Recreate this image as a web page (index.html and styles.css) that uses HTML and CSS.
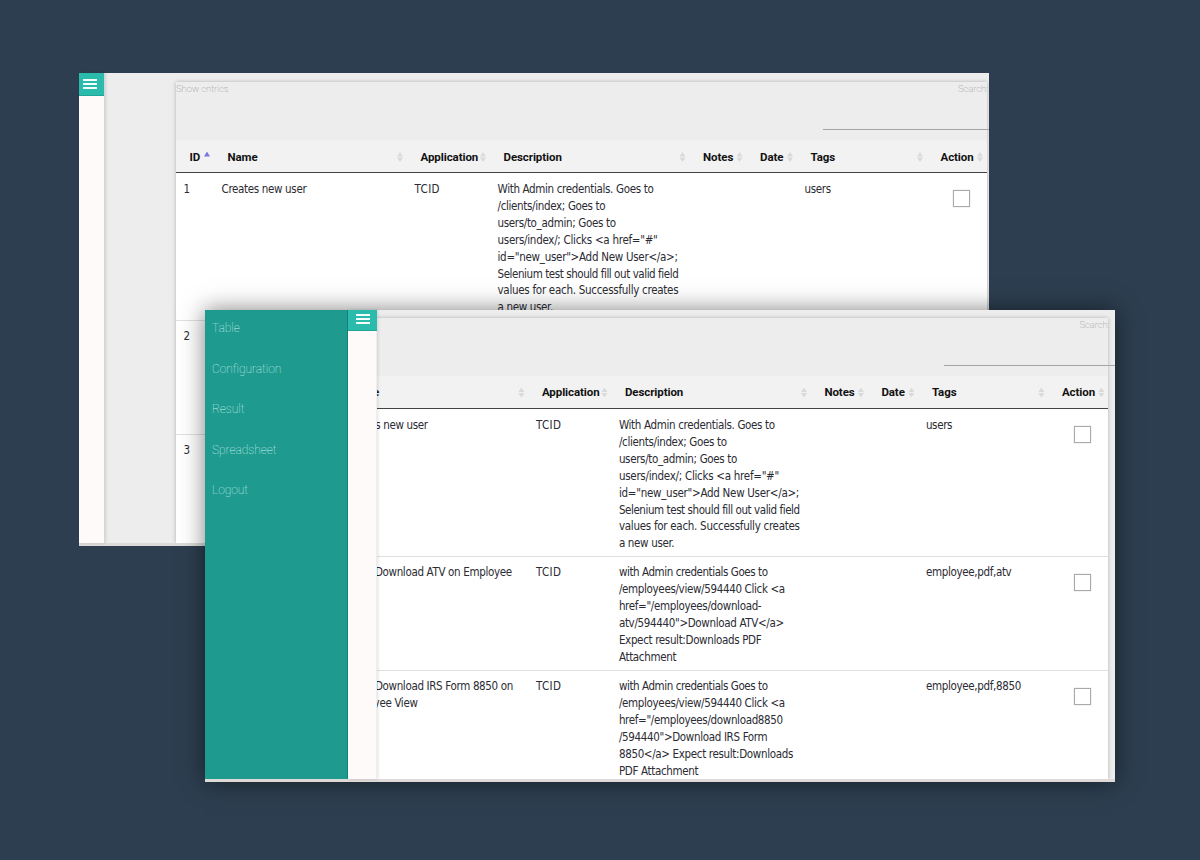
FILE: index.html
```html
<!DOCTYPE html>
<html lang="en">
<head>
<meta charset="utf-8">
<title>Test cases</title>
<link rel="stylesheet" href="styles.css">
</head>
<body>
<main class="desktop">
  <section class="window window-back">
    <aside class="strip">
      <button class="menu" aria-label="Menu"><i></i><i></i><i></i></button>
    </aside>
    <div class="canvas">
      <div class="panel">
        <div class="tools"><span>Show entries</span><span class="search">Search:</span></div>
        <div class="grid head">
          <b>ID<i class="asc"></i></b><b>Name<i class="sort"></i></b><b>Application<i class="sort"></i></b><b>Description<i class="sort"></i></b><b>Notes<i class="sort"></i></b><b>Date<i class="sort"></i></b><b>Tags<i class="sort"></i></b><b>Action<i class="sort"></i></b>
        </div>
        <div class="grid row tall">
          <div>1</div><div>Creates new user</div><div class="app">TCID</div>
          <div>With Admin credentials. Goes to<br>/clients/index; Goes to<br>users/to_admin; Goes to<br><span class="loose">users/index/; Clicks &lt;a href="#"</span><br><span class="loose">id="new_user"&gt;Add New User&lt;/a&gt;;</span><br><span class="tight">Selenium test should fill out valid field</span><br><span class="loose">values for each. Successfully creates</span><br>a new user.</div>
          <div></div><div></div><div>users</div><div><span class="box"></span></div>
        </div>
        <div class="grid row"><div>2</div></div>
        <div class="grid row"><div>3</div></div>
      </div>
    </div>
  </section>

  <section class="window window-front">
    <nav class="drawer">
      <a>Table</a><a>Configuration</a><a>Result</a><a>Spreadsheet</a><a>Logout</a>
    </nav>
    <aside class="strip">
      <button class="menu" aria-label="Menu"><i></i><i></i><i></i></button>
    </aside>
    <div class="canvas">
      <div class="panel">
        <div class="tools"><span></span><span class="search">Search:</span></div>
        <div class="grid head">
          <b></b><b>Name<i class="sort"></i></b><b>Application<i class="sort"></i></b><b>Description<i class="sort"></i></b><b>Notes<i class="sort"></i></b><b>Date<i class="sort"></i></b><b>Tags<i class="sort"></i></b><b>Action<i class="sort"></i></b>
        </div>
        <div class="grid row tall">
          <div></div><div>Creates new user</div><div class="app">TCID</div>
          <div>With Admin credentials. Goes to<br>/clients/index; Goes to<br>users/to_admin; Goes to<br><span class="loose">users/index/; Clicks &lt;a href="#"</span><br><span class="loose">id="new_user"&gt;Add New User&lt;/a&gt;;</span><br><span class="tight">Selenium test should fill out valid field</span><br><span class="loose">values for each. Successfully creates</span><br>a new user.</div>
          <div></div><div></div><div>users</div><div><span class="box"></span></div>
        </div>
        <div class="grid row">
          <div></div><div><span class="shift">Download ATV on Employee</span></div><div class="app">TCID</div>
          <div><span class="tight">with Admin credentials Goes to</span><br>/employees/view/594440 Click &lt;a<br>href="/employees/download-<br>atv/594440"&gt;Download ATV&lt;/a&gt;<br>Expect result:Downloads PDF<br>Attachment</div>
          <div></div><div></div><div>employee,pdf,atv</div><div><span class="box"></span></div>
        </div>
        <div class="grid row">
          <div></div><div><span class="shift">Download IRS Form 8850 on</span><br>Employee View</div><div class="app">TCID</div>
          <div><span class="tight">with Admin credentials Goes to</span><br>/employees/view/594440 Click &lt;a<br>href="/employees/download8850<br>/594440"&gt;Download IRS Form<br>8850&lt;/a&gt; Expect result:Downloads<br>PDF Attachment</div>
          <div></div><div></div><div>employee,pdf,8850</div><div><span class="box"></span></div>
        </div>
      </div>
    </div>
  </section>
</main>
</body>
</html>
```
FILE: styles.css
```css
* { box-sizing: border-box; }
body { margin: 0; }
.desktop {
  position: relative;
  width: 1200px;
  height: 860px;
  overflow: hidden;
  background: #2d3e50;
  font: 11.5px/16.9px "DejaVu Sans Condensed", "DejaVu Sans", sans-serif;
  letter-spacing: -.34px;
  color: #2b2b33;
}
.tight { letter-spacing: -.43px; }
.loose { letter-spacing: -.28px; }
.app { letter-spacing: .4px; }
.window {
  position: absolute;
  display: flex;
  width: 910px;
  background: #ededed;
}
.window-back { left: 79px; top: 73px; height: 473px; border-bottom: 3px solid #dcdbd9; }
.window-front {
  left: 205px;
  top: 310px;
  height: 472px;
  border-bottom: 3px solid #dddad7;
  box-shadow: 0 0 22px rgba(0, 0, 0, .5);
}
.strip {
  flex: none;
  width: 26px;
  background: #fffafa;
  border-right: 1px solid #d6d5d5;
  box-shadow: 1px 0 3px rgba(0, 0, 0, .12);
  z-index: 1;
}
.window-front .strip { width: 29px; border-right-color: #eee; }
.menu {
  display: flex;
  flex-direction: column;
  align-items: flex-start;
  width: 25px;
  height: 23px;
  padding: 6px 0 0 4px;
  border: 0;
  border-bottom: 1px solid #1fa698;
  background: #2abbad;
}
.menu i { width: 14px; height: 1.5px; margin-bottom: 2.5px; background: #f4fffd; }
.window-front .menu { width: 29px; height: 21px; padding: 4px 0 0 8px; }
.drawer {
  flex: none;
  display: flex;
  flex-direction: column;
  gap: 23.7px;
  width: 143px;
  padding: 10px 7px;
  background: #1f9a8e;
  border-right: 1px solid #128477;
  font-family: Roboto, sans-serif;
  font-size: 12px;
  font-weight: 100;
  letter-spacing: -.05px;
  color: #d5f3ef;
}
.canvas {
  flex: 1;
  min-width: 0;
  display: flex;
  justify-content: flex-end;
  padding: 9px 2px 0 0;
  overflow: hidden;
}
.window-front .canvas { padding: 8px 6.6px 0 0; }
.panel {
  flex: none;
  width: 811px;
  box-shadow: 0 0 4px rgba(0, 0, 0, .25);
}
.tools {
  display: flex;
  justify-content: space-between;
  height: 58px;
  font-family: Roboto, sans-serif;
  font-size: 9.5px;
  font-weight: 100;
  line-height: 13px;
  letter-spacing: -.05px;
  color: #888;
}
.search {
  width: 171px;
  height: 48px;
  margin-right: -7px;
  padding-left: 135px;
  border-bottom: 1px solid #a5a5a5;
  white-space: nowrap;
}
.grid {
  display: grid;
  grid-template-columns: 38px 193px 83px 199.5px 57px 50.5px 130px 60px;
}
.head {
  height: 33px;
  background: #f2f2f2;
  border-bottom: 1px solid #444;
  font-family: Roboto, sans-serif;
  font-size: 11.5px;
  letter-spacing: -.08px;
  color: #111;
}
.head b {
  display: flex;
  justify-content: space-between;
  align-items: center;
  padding: 1px 4px 0 13.5px;
}
.window-back .head b { padding-top: 2px; }
.sort { width: 6px; height: 10px; background: #dadada; clip-path: polygon(50% 0, 100% 45%, 0 45%, 0 55%, 100% 55%, 50% 100%, 0 55%, 0 45%); }
.asc { width: 6px; height: 5px; margin-top: -6px; background: #7777e0; clip-path: polygon(50% 0, 100% 100%, 0 100%); }
.row { height: 114px; background: #fff; border-top: 1px solid #e0e0e0; white-space: nowrap; }
.row.tall { height: 147px; border-top: 0; }
.row > div { padding: 7px 0 0 7.5px; }
.row.tall > div { padding-top: 8px; }
.shift { padding-left: 32px; }
.box { display: block; width: 17px; height: 17px; margin: 10px 0 0 18.5px; border: 1.5px solid #aaa; box-shadow: 0 0 1px #bbb; }
.row.tall .box { margin-top: 9px; }
```
